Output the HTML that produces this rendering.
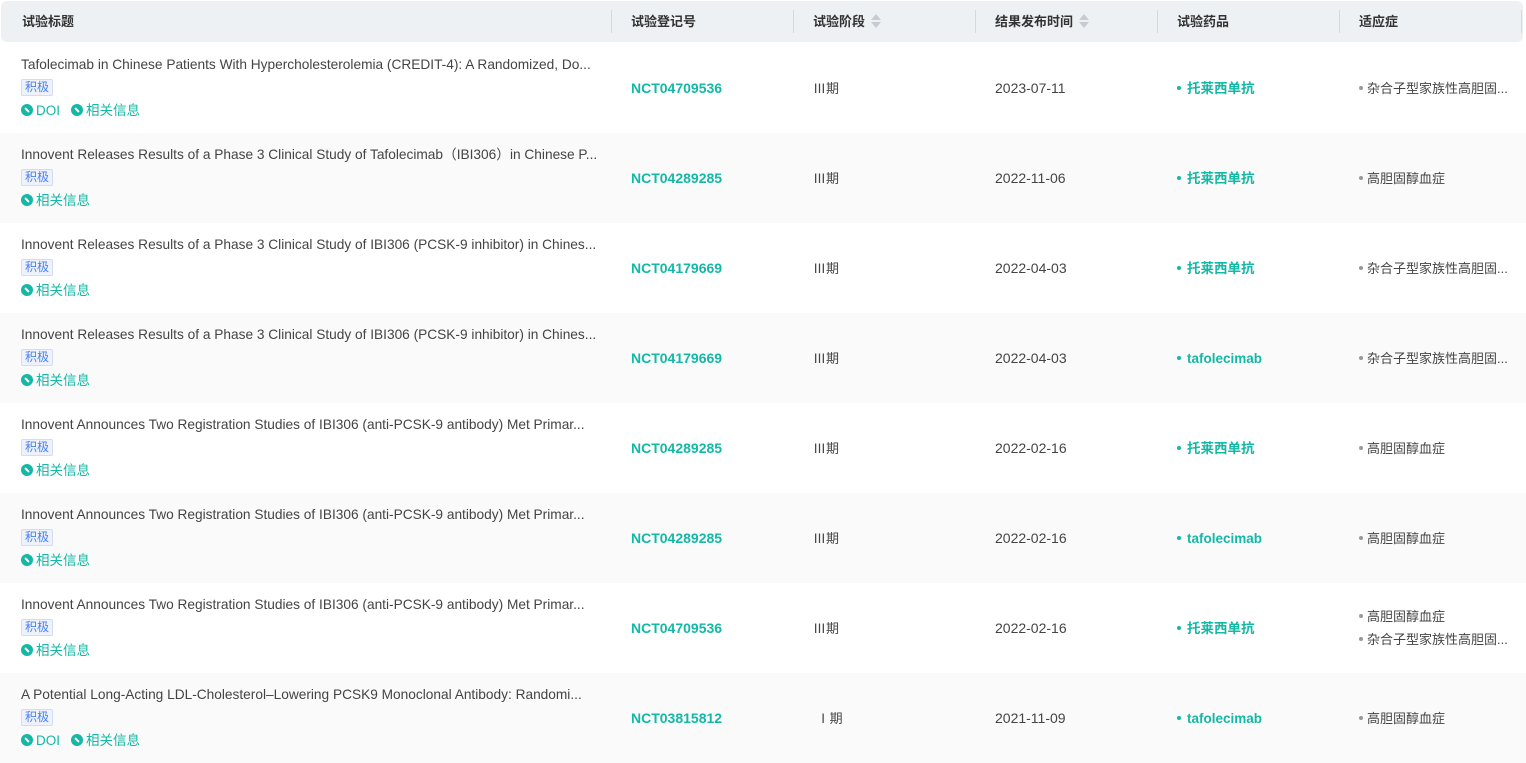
<!DOCTYPE html>
<html><head><meta charset="utf-8"><style>
*{margin:0;padding:0;box-sizing:border-box}
body{width:1526px;height:760px;background:#fff;font-family:"Liberation Sans","Noto Sans CJK SC",sans-serif;font-size:13px;color:#333;position:relative;overflow:hidden}
.hd{position:absolute;left:1px;top:1px;width:1522px;height:41px;background:#eef1f3;border-radius:6px}
.hd div{position:absolute;top:12px;line-height:18px;font-weight:bold;color:#333;font-size:13px;white-space:nowrap}
.sort{display:inline-block;vertical-align:-2px;margin-left:6px;width:10px;height:14px;position:relative}
.sort:before{content:"";position:absolute;left:0;top:0;border:5px solid transparent;border-bottom:6px solid #c8ccd2;border-top:0}
.sort:after{content:"";position:absolute;left:0;top:8px;border:5px solid transparent;border-top:6px solid #c8ccd2;border-bottom:0}
.sep{position:absolute;top:9px;width:1px;height:23px;background:#d6d9dc}
.row{position:absolute;left:0;width:1526px;height:90px}
.row.g{background:#fafafa}
.c{position:absolute;white-space:nowrap;line-height:18px}
.t{left:21px;top:13px;color:#444;font-size:13.7px}
.tag{left:21px;top:36px;font-size:12px;color:#4a80f0;background:#eef2fc;border:1px solid #d3dcf3;border-radius:2px;padding:0 3px;height:17px;line-height:15px}
.lk{top:59px;color:#14b8a6;font-size:13.5px}
.ic{display:inline-block;width:12px;height:12px;border-radius:50%;background:#14b8a6;vertical-align:-1px;margin-right:3px;position:relative}
.ic:after{content:"";position:absolute;left:3px;top:5px;width:6px;height:2px;background:#fff;transform:rotate(45deg);border-radius:1px}
.n{left:631px;top:36px;color:#14b8a6;font-weight:bold;font-size:14px}
.p{left:813px;top:37px;color:#444}
.d{left:995px;top:36px;color:#444;font-size:14px}
.dr{left:1177px;top:37px;color:#14b8a6;font-weight:bold;font-size:13.5px}
.in{left:1359px;top:37px;color:#444}
.dot{display:inline-block;width:4px;height:4px;border-radius:50%;background:#14b8a6;vertical-align:3px;margin-right:6px}
.gd{background:#999;margin-right:4px}
</style></head><body>
<div class="hd">
<div style="left:21px">试验标题</div>
<span class="sep" style="left:610px"></span><div style="left:630px">试验登记号</div>
<span class="sep" style="left:792px"></span><div style="left:812px">试验阶段<span class="sort"></span></div>
<span class="sep" style="left:974px"></span><div style="left:994px">结果发布时间<span class="sort"></span></div>
<span class="sep" style="left:1156px"></span><div style="left:1176px">试验药品</div>
<span class="sep" style="left:1338px"></span><div style="left:1358px">适应症</div>
<span class="sep" style="left:1520px"></span>
</div>

<div class="row" style="top:43px">
<div class="c t">Tafolecimab in Chinese Patients With Hypercholesterolemia (CREDIT-4): A Randomized, Do...</div>
<div class="c tag">积极</div>
<div class="c lk" style="left:21px"><span class="ic"></span>DOI</div>
<div class="c lk" style="left:71px"><span class="ic"></span>相关信息</div>
<div class="c n">NCT04709536</div><div class="c p">Ⅲ期</div><div class="c d">2023-07-11</div>
<div class="c dr"><span class="dot"></span>托莱西单抗</div><div class="c in"><span class="dot gd"></span>杂合子型家族性高胆固...</div>
</div>

<div class="row g" style="top:133px">
<div class="c t">Innovent Releases Results of a Phase 3 Clinical Study of Tafolecimab（IBI306）in Chinese P...</div>
<div class="c tag">积极</div>
<div class="c lk" style="left:21px"><span class="ic"></span>相关信息</div>
<div class="c n">NCT04289285</div><div class="c p">Ⅲ期</div><div class="c d">2022-11-06</div>
<div class="c dr"><span class="dot"></span>托莱西单抗</div><div class="c in"><span class="dot gd"></span>高胆固醇血症</div>
</div>

<div class="row" style="top:223px">
<div class="c t">Innovent Releases Results of a Phase 3 Clinical Study of IBI306 (PCSK-9 inhibitor) in Chines...</div>
<div class="c tag">积极</div>
<div class="c lk" style="left:21px"><span class="ic"></span>相关信息</div>
<div class="c n">NCT04179669</div><div class="c p">Ⅲ期</div><div class="c d">2022-04-03</div>
<div class="c dr"><span class="dot"></span>托莱西单抗</div><div class="c in"><span class="dot gd"></span>杂合子型家族性高胆固...</div>
</div>

<div class="row g" style="top:313px">
<div class="c t">Innovent Releases Results of a Phase 3 Clinical Study of IBI306 (PCSK-9 inhibitor) in Chines...</div>
<div class="c tag">积极</div>
<div class="c lk" style="left:21px"><span class="ic"></span>相关信息</div>
<div class="c n">NCT04179669</div><div class="c p">Ⅲ期</div><div class="c d">2022-04-03</div>
<div class="c dr"><span class="dot"></span>tafolecimab</div><div class="c in"><span class="dot gd"></span>杂合子型家族性高胆固...</div>
</div>

<div class="row" style="top:403px">
<div class="c t">Innovent Announces Two Registration Studies of IBI306 (anti-PCSK-9 antibody) Met Primar...</div>
<div class="c tag">积极</div>
<div class="c lk" style="left:21px"><span class="ic"></span>相关信息</div>
<div class="c n">NCT04289285</div><div class="c p">Ⅲ期</div><div class="c d">2022-02-16</div>
<div class="c dr"><span class="dot"></span>托莱西单抗</div><div class="c in"><span class="dot gd"></span>高胆固醇血症</div>
</div>

<div class="row g" style="top:493px">
<div class="c t">Innovent Announces Two Registration Studies of IBI306 (anti-PCSK-9 antibody) Met Primar...</div>
<div class="c tag">积极</div>
<div class="c lk" style="left:21px"><span class="ic"></span>相关信息</div>
<div class="c n">NCT04289285</div><div class="c p">Ⅲ期</div><div class="c d">2022-02-16</div>
<div class="c dr"><span class="dot"></span>tafolecimab</div><div class="c in"><span class="dot gd"></span>高胆固醇血症</div>
</div>

<div class="row" style="top:583px">
<div class="c t">Innovent Announces Two Registration Studies of IBI306 (anti-PCSK-9 antibody) Met Primar...</div>
<div class="c tag">积极</div>
<div class="c lk" style="left:21px"><span class="ic"></span>相关信息</div>
<div class="c n">NCT04709536</div><div class="c p">Ⅲ期</div><div class="c d">2022-02-16</div>
<div class="c dr"><span class="dot"></span>托莱西单抗</div>
<div class="c in" style="top:25px"><span class="dot gd"></span>高胆固醇血症</div>
<div class="c in" style="top:48px"><span class="dot gd"></span>杂合子型家族性高胆固...</div>
</div>

<div class="row g" style="top:673px">
<div class="c t">A Potential Long-Acting LDL-Cholesterol–Lowering PCSK9 Monoclonal Antibody: Randomi...</div>
<div class="c tag">积极</div>
<div class="c lk" style="left:21px"><span class="ic"></span>DOI</div>
<div class="c lk" style="left:71px"><span class="ic"></span>相关信息</div>
<div class="c n">NCT03815812</div><div class="c p">&nbsp;Ⅰ期</div><div class="c d">2021-11-09</div>
<div class="c dr"><span class="dot"></span>tafolecimab</div><div class="c in"><span class="dot gd"></span>高胆固醇血症</div>
</div>
</body></html>
